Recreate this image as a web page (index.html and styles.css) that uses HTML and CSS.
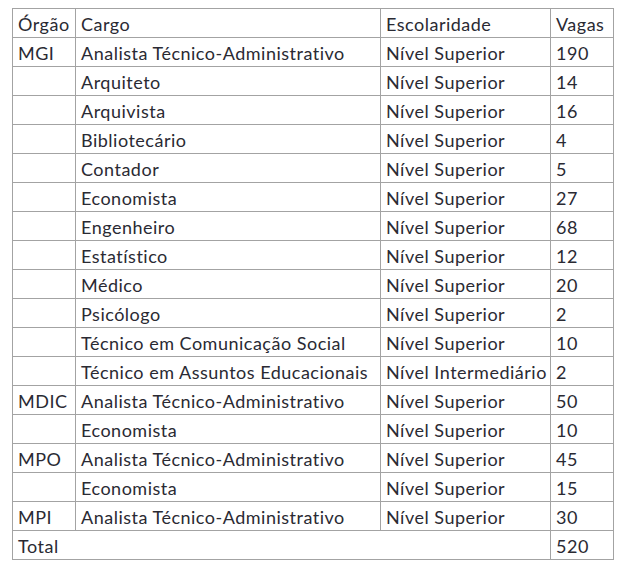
FILE: index.html
```html
<!DOCTYPE html>
<html lang="pt">
<head>
<meta charset="utf-8">
<link rel="stylesheet" href="styles.css">
</head>
<body>
<table class="vagas">
<colgroup>
<col class="c1"><col class="c2"><col class="c3"><col class="c4">
</colgroup>
<tbody>
<tr><td>Órgão</td><td>Cargo</td><td>Escolaridade</td><td>Vagas</td></tr>
<tr><td>MGI</td><td>Analista Técnico-Administrativo</td><td>Nível Superior</td><td>190</td></tr>
<tr><td></td><td>Arquiteto</td><td>Nível Superior</td><td>14</td></tr>
<tr><td></td><td>Arquivista</td><td>Nível Superior</td><td>16</td></tr>
<tr><td></td><td>Bibliotecário</td><td>Nível Superior</td><td>4</td></tr>
<tr><td></td><td>Contador</td><td>Nível Superior</td><td>5</td></tr>
<tr><td></td><td>Economista</td><td>Nível Superior</td><td>27</td></tr>
<tr><td></td><td>Engenheiro</td><td>Nível Superior</td><td>68</td></tr>
<tr><td></td><td>Estatístico</td><td>Nível Superior</td><td>12</td></tr>
<tr><td></td><td>Médico</td><td>Nível Superior</td><td>20</td></tr>
<tr><td></td><td>Psicólogo</td><td>Nível Superior</td><td>2</td></tr>
<tr><td></td><td>Técnico em Comunicação Social</td><td>Nível Superior</td><td>10</td></tr>
<tr><td></td><td>Técnico em Assuntos Educacionais</td><td>Nível Intermediário</td><td>2</td></tr>
<tr><td>MDIC</td><td>Analista Técnico-Administrativo</td><td>Nível Superior</td><td>50</td></tr>
<tr><td></td><td>Economista</td><td>Nível Superior</td><td>10</td></tr>
<tr><td>MPO</td><td>Analista Técnico-Administrativo</td><td>Nível Superior</td><td>45</td></tr>
<tr><td></td><td>Economista</td><td>Nível Superior</td><td>15</td></tr>
<tr><td>MPI</td><td>Analista Técnico-Administrativo</td><td>Nível Superior</td><td>30</td></tr>
<tr><td colspan="3">Total</td><td>520</td></tr>
</tbody>
</table>
</body>
</html>
```
FILE: styles.css
```css
html, body {
  margin: 0;
  padding: 0;
  background: #ffffff;
}
body {
  padding: 8px 0 0 12px;
}
.vagas {
  border-collapse: collapse;
  table-layout: fixed;
  width: 601px;
  font-family: "Lato", "Open Sans", sans-serif;
  font-size: 18px;
  letter-spacing: 0.5px;
  color: #2a2a33;
}
.c1 { width: 63px; }
.c2 { width: 305px; }
.c3 { width: 170px; }
.c4 { width: 63px; }
.vagas td {
  border: 1px solid #a3a3a3;
  height: 29px;
  padding: 2px 0 0 5px;
  box-sizing: border-box;
  white-space: nowrap;
  overflow: hidden;
  line-height: 26px;
  vertical-align: middle;
}
```
